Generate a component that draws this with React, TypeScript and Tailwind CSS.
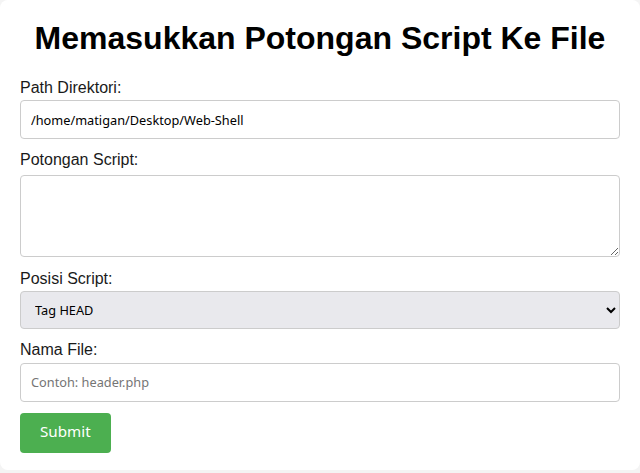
import React from "react";

const labelCls = "block pt-[2px] text-[16px] leading-[18.4px] text-[#1a1a1a]";
const fieldCls =
  "block w-full rounded border border-[#ccc] bg-white px-[10px] text-[12.75px] text-black outline-none placeholder:text-[#757575] font-['Noto_Sans',sans-serif]";

const App: React.FC = () => {
  return (
    <div
      className="w-[640px] h-[473px] bg-[#f4f4f4]"
      style={{ fontFamily: '"Liberation Sans", Arial, sans-serif' }}
    >
      <div className="h-[470px] rounded-lg bg-white px-5 pt-5">
        <h1 className="text-center text-[32px] font-bold leading-[37px] text-black">
          Memasukkan Potongan Script Ke File
        </h1>

        <form className="mt-[20px]" onSubmit={(e) => e.preventDefault()}>
          <label className={labelCls}>Path Direktori:</label>
          <input
            type="text"
            defaultValue="/home/matigan/Desktop/Web-Shell"
            className={`${fieldCls} mt-[3px] h-[39px]`}
          />

          <label className={`${labelCls} mt-[10px]`}>Potongan Script:</label>
          <textarea className={`${fieldCls} mt-[5px] h-[82px] py-[10px]`} />

          <label className={`${labelCls} mt-[11px]`}>Posisi Script:</label>
          <select
            defaultValue="head"
            className="mt-[3px] block h-[38px] w-full rounded border border-[#ccc] bg-[#e9e9ed] px-[10px] text-[12.75px] text-black font-['Noto_Sans',sans-serif]"
          >
            <option value="head">Tag HEAD</option>
            <option value="body">Tag BODY</option>
            <option value="footer">Akhir File</option>
          </select>

          <label className={`${labelCls} mt-[10px]`}>Nama File:</label>
          <input
            type="text"
            placeholder="Contoh: header.php"
            className={`${fieldCls} mt-[3px] h-[39px]`}
          />

          <button
            type="submit"
            className="mt-[11px] h-[40px] rounded bg-[#4caf50] px-5 pb-[2px] text-[15.2px] text-white font-['Noto_Sans',sans-serif]"
          >
            Submit
          </button>
        </form>
      </div>
    </div>
  );
};

export default App;
